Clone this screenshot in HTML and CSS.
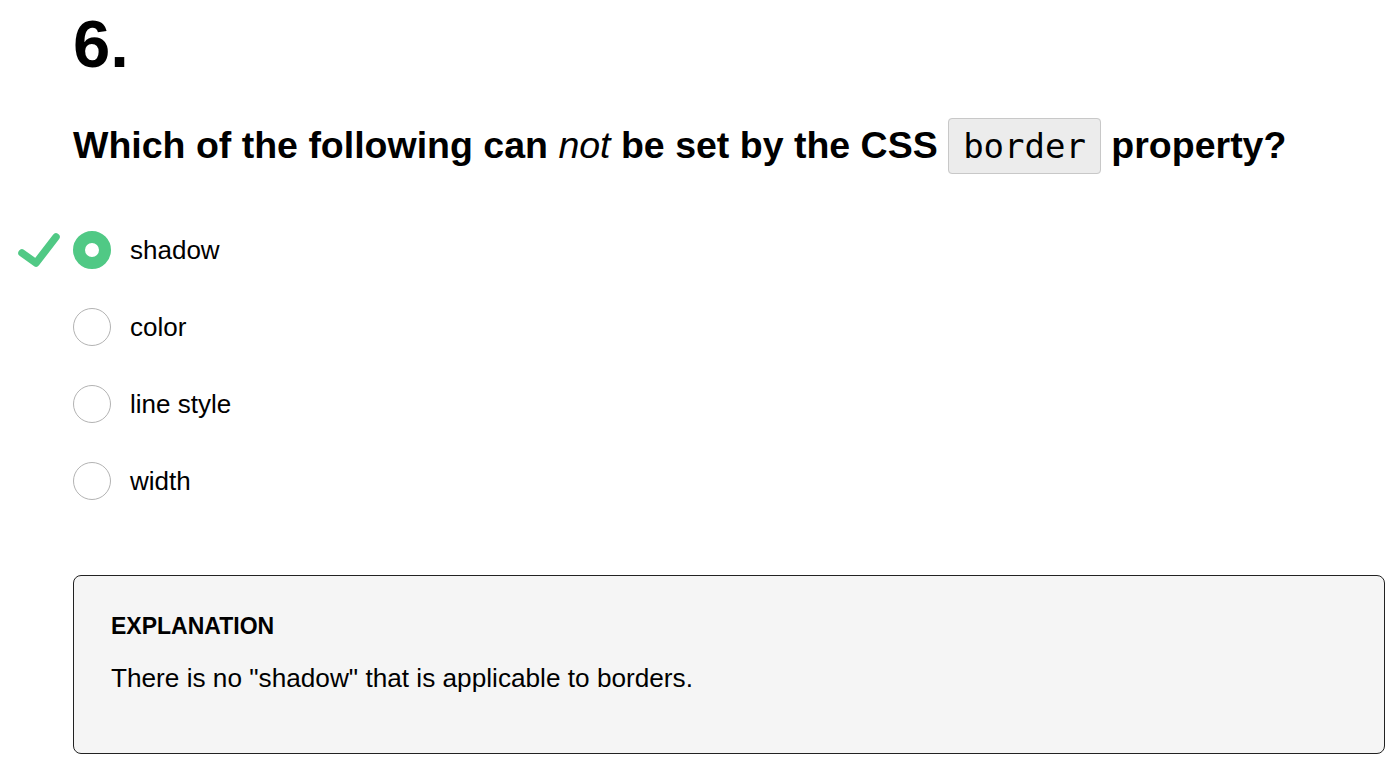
FILE: index.html
```html
<!DOCTYPE html>
<html>
<head>
<meta charset="utf-8">
<link rel="stylesheet" href="styles.css">
</head>
<body>
<main class="quiz">
  <h1 class="num">6.</h1>
  <h2 class="question">Which of the following can <em>not</em> be set by the CSS <code class="code">border</code> property?</h2>
  <ul class="options">
    <li class="option correct">
      <svg class="check" width="50" height="40" viewBox="0 0 50 40"><path d="M12 21 L26 31 L46 5" fill="none" stroke="#50c985" stroke-width="7.5" stroke-linecap="round" stroke-linejoin="round"/></svg>
      <span class="radio selected"></span><span class="label">shadow</span>
    </li>
    <li class="option"><span class="radio"></span><span class="label">color</span></li>
    <li class="option"><span class="radio"></span><span class="label">line style</span></li>
    <li class="option"><span class="radio"></span><span class="label">width</span></li>
  </ul>
  <section class="explanation">
    <h3 class="exp-title">EXPLANATION</h3>
    <p class="exp-text">There is no "shadow" that is applicable to borders.</p>
  </section>
</main>
</body>
</html>
```

FILE: styles.css
```css
html, body { margin: 0; padding: 0; background: #fff; }
body { font-family: "Liberation Sans", Arial, sans-serif; color: #000; }
.quiz { padding: 6px 12px 14px 73px; }
.num { font-size: 67px; font-weight: 700; margin: 0; line-height: 76px; }
.question { font-size: 37.5px; font-weight: 700; margin: 35px 0 0; line-height: 56px; }
.question em { font-weight: 400; font-style: italic; }
.code { font-family: "DejaVu Sans Mono", monospace; font-weight: 400; font-size: 34px; background: #ececec; border: 1px solid #c8c8c8; border-radius: 4px; padding: 7px 14px; }
.options { list-style: none; margin: 57px 0 0; padding: 0; display: flex; flex-direction: column; gap: 39px; }
.option { position: relative; display: flex; align-items: center; height: 38px; }
.check { position: absolute; left: -63px; top: 1px; }
.radio { width: 36px; height: 36px; border: 1px solid #b3b3b3; border-radius: 50%; box-sizing: content-box; flex: none; }
.radio.selected { width: 14px; height: 14px; border: 12px solid #50c985; background: #fff; }
.label { font-size: 26px; margin-left: 19px; }
.explanation { margin-top: 75px; background: #f5f5f5; border: 1px solid #222; border-radius: 8px; padding: 36px 37px 59px; }
.exp-title { font-size: 23px; font-weight: 700; margin: 0; line-height: 28px; }
.exp-text { font-size: 26.2px; margin: 22px 0 0; line-height: 32px; }
```
